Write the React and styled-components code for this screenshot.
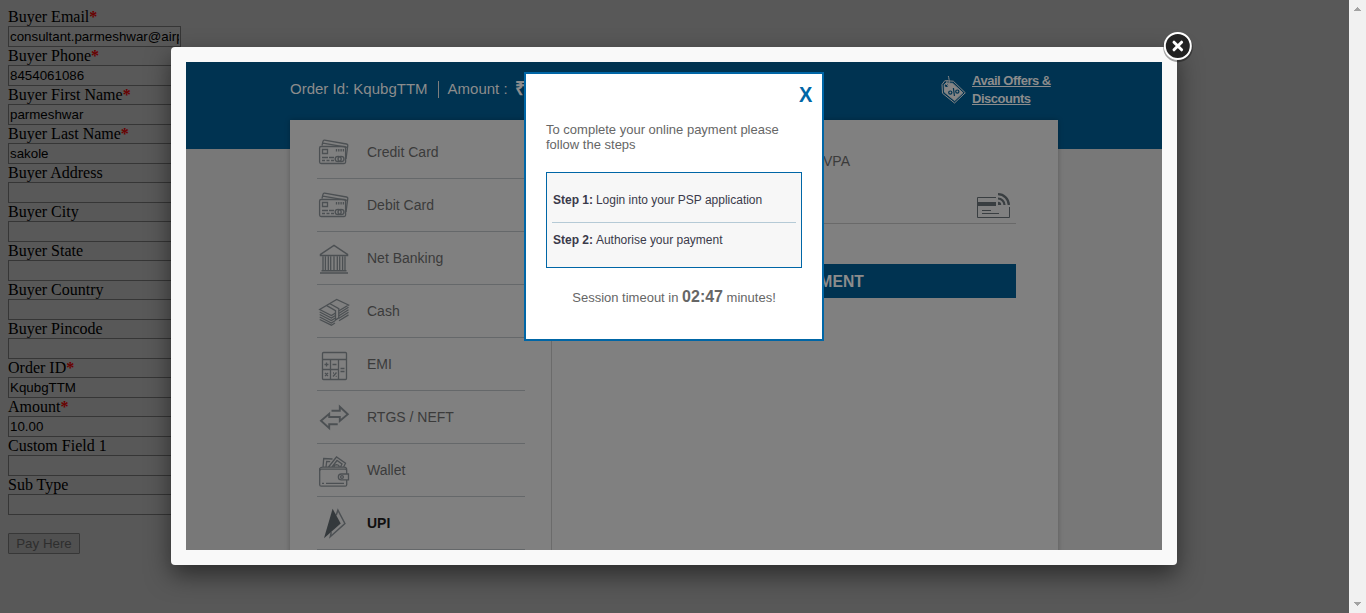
import React from "react";
import styled, { createGlobalStyle } from "styled-components";

const GlobalStyle = createGlobalStyle`
  * { box-sizing: border-box; }
  html, body { margin: 0; padding: 0; height: 100%; overflow: hidden; background: #585858; }
`;

const sans = `"Liberation Sans", Arial, sans-serif`;

const Page = styled.div`
  position: relative;
  display: flex;
  justify-content: space-between;
  height: 613px;
  overflow: hidden;
  background: #585858;
  color: #000;
  font: 16px/18px "Liberation Serif", "Times New Roman", serif;
`;

const BuyerForm = styled.form`
  display: flex;
  flex-direction: column;
  align-items: flex-start;
  padding: 8px;
`;

const FieldLabel = styled.label`
  height: 18px;
  white-space: nowrap;
`;

const Required = styled.span`
  color: #6a0000;
  font-weight: bold;
`;

const FieldInput = styled.input`
  width: 173px;
  height: 21px;
  margin: 0;
  padding: 1px;
  border: 1px solid #363636;
  border-radius: 0;
  outline: 0;
  background: #595959;
  color: #000;
  font: 13.333px ${sans};
`;

const PayButton = styled.button`
  width: 72px;
  height: 21px;
  margin-top: 18px;
  padding: 0;
  border: 1px solid #373737;
  border-radius: 1px;
  background: #505050;
  color: #2e2e2e;
  font: 13.333px ${sans};
`;

const ScrollTrack = styled.div`
  display: flex;
  flex-direction: column;
  justify-content: space-between;
  align-items: center;
  width: 17px;
  padding: 7px 0 7px;
  background: #f1f1f1;
`;

const Lightbox = styled.div`
  position: absolute;
  left: 171px;
  top: 47px;
  width: 1006px;
  height: 518px;
  padding: 15px;
  border-radius: 4px;
  background: #f9f9f9;
  box-shadow: 0 10px 25px rgba(0, 0, 0, 0.5);
  font-family: ${sans};
`;

const CloseBadge = styled.button`
  position: absolute;
  top: -18px;
  right: -18px;
  width: 36px;
  height: 36px;
  padding: 0;
  border: 0;
  background: transparent;
  svg { display: block; }
`;

const Frame = styled.div`
  height: 488px;
  overflow: hidden;
  background: #787878;
`;

const Header = styled.header`
  display: flex;
  justify-content: space-between;
  height: 87px;
  padding: 0 105px 0 104px;
  background: #003351;
  color: #8c8c8c;
`;

const OrderSummary = styled.div`
  display: flex;
  align-items: center;
  height: 18px;
  margin-top: 18px;
  font-size: 15px;
  white-space: nowrap;
`;

const AmountText = styled.span`
  display: flex;
  align-items: center;
  height: 17px;
  margin-left: 10px;
  padding-left: 9px;
  border-left: 1px solid #7d7d7d;
`;

const Rupee = styled.b`
  margin-left: 7px;
  font-size: 19px;
`;

const Offers = styled.div`
  display: flex;
  gap: 5px;
  width: 116px;
  margin-top: 10px;
  font-size: 13px;
  line-height: 18px;
  font-weight: bold;
  letter-spacing: -0.48px;
  text-decoration: underline;
  svg { flex: none; margin-top: 3px; }
`;

const Card = styled.main`
  position: relative;
  display: flex;
  width: 768px;
  height: 460px;
  margin: -29px 0 0 104px;
  background: #808080;
  box-shadow: 0 0 5px rgba(0, 0, 0, 0.25);
`;

const Menu = styled.nav`
  width: 262px;
  padding: 6px 26px 0 27px;
  border-right: 1px solid #6b6b6b;
`;

const MenuItem = styled.div`
  display: flex;
  align-items: center;
  height: 53px;
  border-bottom: 1px solid #65686a;
  color: ${(p) => (p.$active ? "#101010" : "#3b3b3b")};
  font-size: 14px;
  font-weight: ${(p) => (p.$active ? "bold" : "normal")};
  svg { width: 34px; height: 34px; margin-right: 16px; fill: none; stroke: #4c5053; stroke-width: 1.3; }
`;

const Panel = styled.section`
  flex: 1;
  padding: 32px 42px 0 35px;
`;

const VpaLabel = styled.div`
  padding-left: 236px;
  color: #3b3b3b;
  font-size: 14px;
  line-height: 18px;
`;

const VpaField = styled.div`
  display: flex;
  justify-content: flex-end;
  align-items: flex-end;
  height: 54px;
  padding: 0 5px 4px 0;
  border-bottom: 1px solid #696969;
`;

const PaymentButton = styled.button`
  display: block;
  width: 100%;
  height: 34px;
  margin-top: 40px;
  padding: 2px 0 0;
  border: 0;
  background: #003351;
  color: #8c8c8c;
  font: bold 15.7px ${sans};
`;

const Dialog = styled.div`
  position: absolute;
  left: 353px;
  top: 25px;
  width: 300px;
  height: 269px;
  padding: 48px 20px 0;
  border: 2px solid #0066a6;
  background: #fff;
  color: #666;
  font-size: 13px;
  line-height: 15px;
`;

const DialogClose = styled.button`
  position: absolute;
  top: 9px;
  right: 10px;
  padding: 0;
  border: 0;
  background: none;
  color: #0066a6;
  font: bold 21.5px/24px ${sans};
  transform: scaleX(0.93);
  transform-origin: right;
`;

const Steps = styled.div`
  height: 96px;
  margin-top: 20px;
  padding: 5px;
  border: 1px solid #0066a6;
  background: #f7f7f7;
`;

const Step = styled.div`
  display: flex;
  align-items: center;
  gap: 3px;
  height: ${(p) => (p.$first ? "45px" : "34px")};
  padding: 0 1px;
  border-bottom: ${(p) => (p.$first ? "1px solid #b5cad6" : "0")};
  color: #3a3a4a;
  font-size: 12px;
  letter-spacing: -0.01px;
`;

const Timeout = styled.div`
  margin-top: 19px;
  text-align: center;
  line-height: 20px;
  b { font-size: 16px; }
`;

const CardIcon = () => (
  <svg viewBox="0 0 34 34">
    <path d="M5 10.5 6 6.3Q6.3 5 7.5 5.2L29.5 9Q31 9.3 30.8 10.5L29 24M6 8.2 30.5 12.3" />
    <rect x="2.6" y="11.5" width="26" height="17" rx="1.5" />
    <path d="M5.5 14.5h5v4h-5zM19.5 14v2.5M21.8 14v2.5M24.1 14v2.5M26.4 14v2.5M5 22.5h6M12 22.5h5M5 25.5h3M9.5 25.5h3M14 25.5h3" />
    <ellipse cx="21.2" cy="24" rx="3" ry="2.6" /><ellipse cx="24" cy="24" rx="3" ry="2.6" />
  </svg>
);
const BankIcon = () => (
  <svg viewBox="0 -.3 34 34">
    <path d="M3.5 14.2v-1L17 4 30.5 13.2v1zM4 14.2h26M3 31.7h28M4.5 29.4h25" strokeWidth="1.5" />
    <path d="M6 15v14M8.4 15v14M11.3 15v14M13.7 15v14M17 15v14M20.3 15v14M22.7 15v14M25.6 15v14M28 15v14" />
  </svg>
);
const CashIcon = () => (
  <svg viewBox="0 0 34 34">
    <path d="M18.5 19 14.4 21.6 2.7 15.5 19.7 5.5 31.5 11 22 16.8M2.7 18l11.7 6L18 21.8M22 19.2l9.5-5.9M2.7 20.5l11.7 6L18 24.3M22 21.7l9.5-5.9M2.7 23l11.7 6L18 26.8M22 24.2l9.5-5.9M2.7 25.5l11.7 5.7L18 29M22 26.7l9.5-5.8" />
    <path d="m9.8 11.6 8.7 5V26l3.3-2.2V14.7L13 9.7" />
  </svg>
);
const EmiIcon = () => (
  <svg viewBox="0 -1 34 34">
    <rect x="5.5" y="4.5" width="24" height="27" rx="1" />
    <path d="M5.5 11.5h24M13.5 11.5v20M21.5 11.5v20M5.5 21.5h16M7.5 16.5h4M9.5 14.5v4M15.5 16.5h4M23.5 20.5h4M23.5 23.5h4M8 25l3 3M11 25l-3 3M16 28.5l3.5-4M16 25h1M18.7 28.3h1" />
  </svg>
);
const TransferIcon = () => (
  <svg viewBox="0 0 34 34" style={{ strokeWidth: 1.9 }}>
    <path d="M14.5 10.7h8.3V6.8l8 7.5-8 6.7v-4H12.2v-3.2L4 20.7l8.2 7.4v-3.8h8.5" />
  </svg>
);
const WalletIcon = () => (
  <svg viewBox="0 -1 34 34">
    <rect x="2.7" y="15.2" width="27" height="17" rx="1.5" />
    <path d="M2.7 17v-2.5Q3.5 13.2 6 13.2h21q3 0 2.7 3M6 13.2l.7-8.7 8.8.5M9 13l.7-5.5 3.5.2M11.5 13l8-10 9 6.3-2 3.9M15 13l5-6.5L25 10l-1.5 3M17 13q.5-3 4-2 1.5 1 1.2 2M5 29.3h2M9 29.3h18" />
    <path d="M31.5 20h-7.2a2.9 2.9 0 0 0 0 5.9h7.2z" fill="#808080" />
    <circle cx="25" cy="23" r="1.4" />
  </svg>
);
const UpiIcon = () => (
  <svg viewBox="0 -.7 34 34">
    <path d="m19.2 8.5 1.7-5 7 13.3L13.3 30l1-4.5" strokeWidth="1.5" />
    <path d="m15.6 2 8.1 14.8L7 31.5z" fill="#34393c" stroke="none" />
  </svg>
);

const OfferTag = () => (
  <svg width="26" height="30" viewBox="0 0 26 30" fill="none" stroke="#858585">
    <path d="M1 9.5 3.8 5.7l8.5.5 12 11.6-10.8 10.2L1.5 18.3z" />
    <path d="M3.2 9.8 5 7.9l6.7.5 10.2 9.4-8.3 7.8L3.5 17.2z" fill="#858585" />
    <circle cx="5.5" cy="10.5" r="1.6" fill="#003351" stroke="none" />
    <path d="M6 11C9 9.5 8.5 5.5 7.3 1M6.2 5l-.8 5" />
    <g stroke="#003351" strokeWidth="1.2"><circle cx="9.3" cy="17.6" r="1.6" /><circle cx="16.3" cy="16.6" r="1.6" /><path d="m12.4 13 1 8" /></g>
  </svg>
);

const PayCardIcon = () => (
  <svg width="34" height="26" viewBox="0 0 34 26" fill="none" stroke="#393e41">
    <path d="M19 4.5H.5v20h32V14" />
    <path d="M1 11h18" strokeWidth="4" />
    <path d="M5 17.5h9M5 20.5h17" />
    <path d="M21 1.2A10.8 10.8 0 0 1 31.8 12M21 5.5A6.5 6.5 0 0 1 27.5 12" strokeWidth="2.2" />
    <path d="M21 12V8.8a3.2 3.2 0 0 1 3.2 3.2z" fill="#393e41" stroke="none" />
  </svg>
);

const fields = [
  ["Buyer Email", true, "consultant.parmeshwar@airpay.co.in"],
  ["Buyer Phone", true, "8454061086"],
  ["Buyer First Name", true, "parmeshwar"],
  ["Buyer Last Name", true, "sakole"],
  ["Buyer Address", false, ""],
  ["Buyer City", false, ""],
  ["Buyer State", false, ""],
  ["Buyer Country", false, ""],
  ["Buyer Pincode", false, ""],
  ["Order ID", true, "KqubgTTM"],
  ["Amount", true, "10.00"],
  ["Custom Field 1", false, ""],
  ["Sub Type", false, ""],
];

const methods = [
  ["Credit Card", CardIcon],
  ["Debit Card", CardIcon],
  ["Net Banking", BankIcon],
  ["Cash", CashIcon],
  ["EMI", EmiIcon],
  ["RTGS / NEFT", TransferIcon],
  ["Wallet", WalletIcon],
  ["UPI", UpiIcon],
];

export default function App() {
  return (
    <Page>
      <GlobalStyle />
      <BuyerForm>
        {fields.map(([label, required, value]) => (
          <React.Fragment key={label}>
            <FieldLabel>{label}{required && <Required>*</Required>}</FieldLabel>
            <FieldInput defaultValue={value} />
          </React.Fragment>
        ))}
        <PayButton type="button">Pay Here</PayButton>
      </BuyerForm>
      <ScrollTrack>
        <svg width="7" height="4" shapeRendering="crispEdges"><path d="M0 4 3.5 0 7 4z" fill="#a3a3a3" /></svg>
        <svg width="7" height="4" shapeRendering="crispEdges"><path d="M0 0h7L3.5 4z" fill="#a3a3a3" /></svg>
      </ScrollTrack>

      <Lightbox>
        <Frame>
          <Header>
            <OrderSummary>
              Order Id: KqubgTTM
              <AmountText>Amount : <Rupee>₹</Rupee></AmountText>
            </OrderSummary>
            <Offers><OfferTag /><span>Avail Offers &amp; Discounts</span></Offers>
          </Header>
          <Card>
            <Menu>
              {methods.map(([name, Icon]) => (
                <MenuItem key={name} $active={name === "UPI"}><Icon />{name}</MenuItem>
              ))}
            </Menu>
            <Panel>
              <VpaLabel>VPA</VpaLabel>
              <VpaField><PayCardIcon /></VpaField>
              <PaymentButton>MAKE PAYMENT</PaymentButton>
            </Panel>
          </Card>
        </Frame>
        <Dialog>
          <DialogClose>X</DialogClose>
          <div>To complete your online payment please follow the steps</div>
          <Steps>
            <Step $first><b>Step 1:</b> Login into your PSP application</Step>
            <Step><b>Step 2:</b> Authorise your payment</Step>
          </Steps>
          <Timeout>Session timeout in <b>02:47</b> minutes!</Timeout>
        </Dialog>
        <CloseBadge aria-label="Close">
          <svg width="36" height="36" viewBox="0 0 36 36">
            <circle cx="19" cy="18.4" r="14.8" fill="#000" opacity=".35" />
            <circle cx="18.8" cy="17" r="13" fill="#222" stroke="#fff" strokeWidth="2" />
            <path d="m15 13.2 7.6 7.6m0-7.6L15 20.8" stroke="#fff" strokeWidth="3" strokeLinecap="round" />
          </svg>
        </CloseBadge>
      </Lightbox>
    </Page>
  );
}
